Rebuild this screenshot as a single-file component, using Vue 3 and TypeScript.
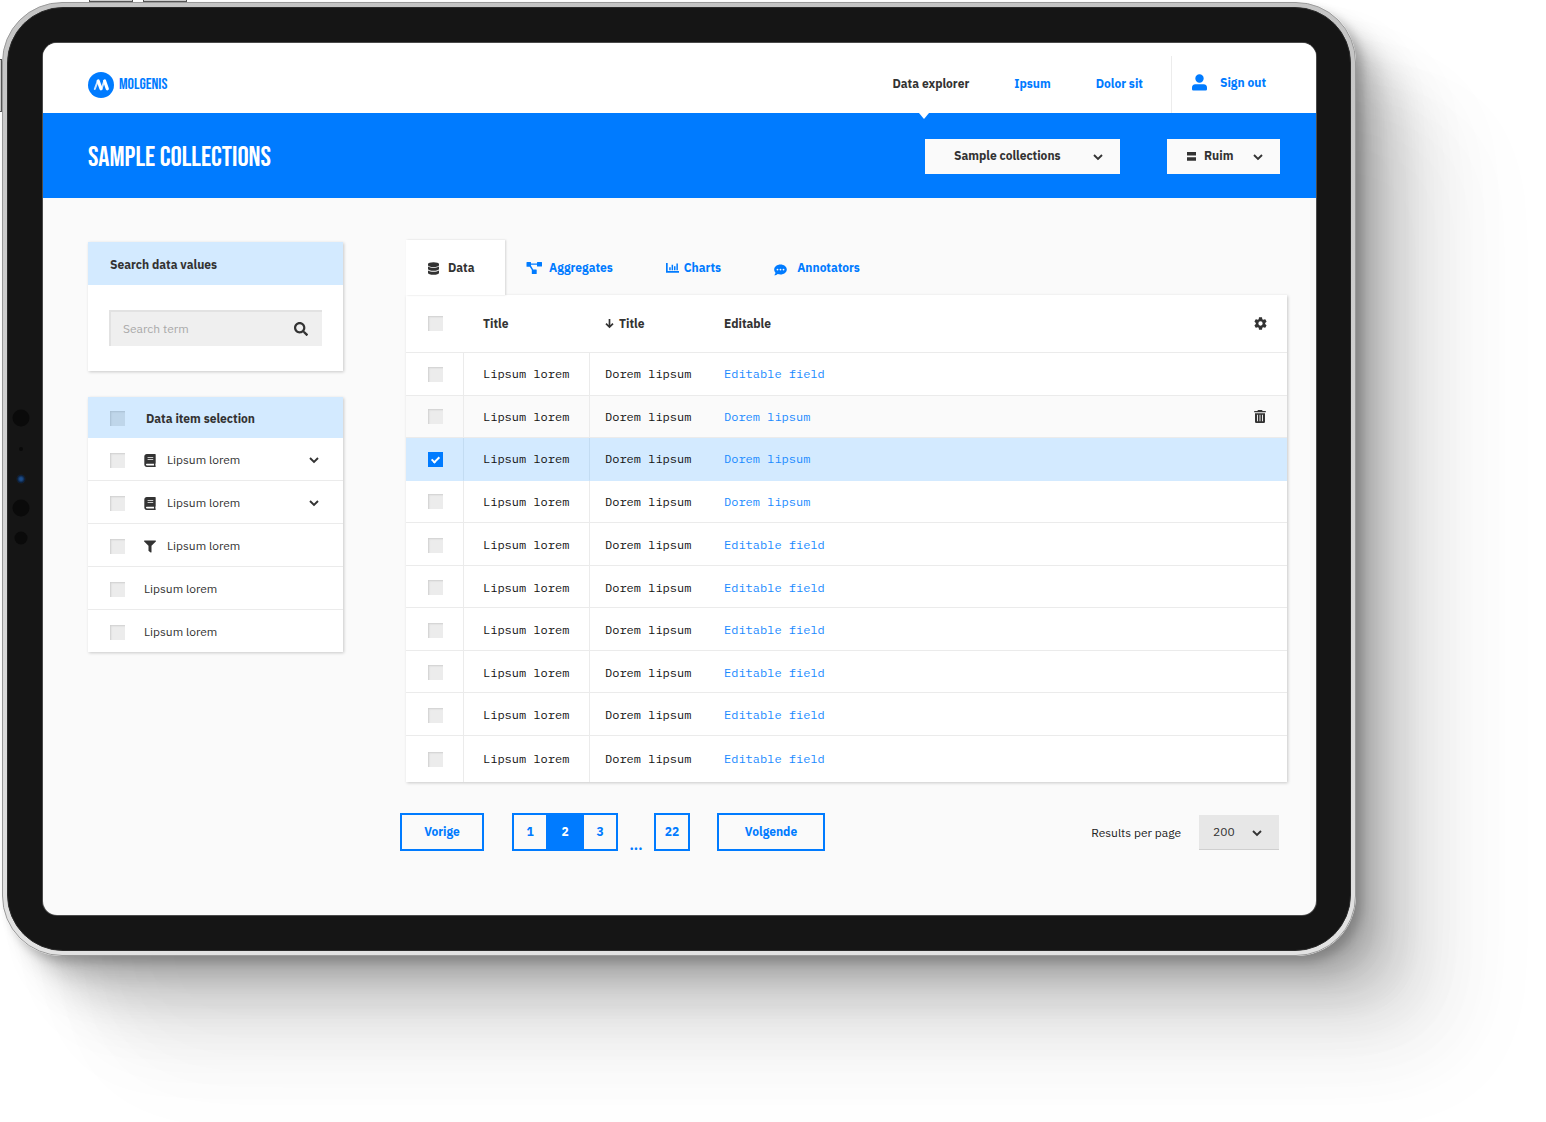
<script setup lang="ts">
import { reactive, ref } from 'vue'

interface Glyph {
  box: string
  d: string
}

const glyphs: Record<string, Glyph> = {
  user: {
    box: '0 0 15 17',
    d: 'M7.500 0.300a4.200 4.200 0 1 1 0 8.400a4.200 4.200 0 1 1 0 -8.400zM3.600 10.200h7.800a3.500 3.500 0 0 1 3.600 3.500v1.600a1.300 1.300 0 0 1 -1.300 1.300h-12.400a1.300 1.300 0 0 1 -1.300 -1.300v-1.600a3.500 3.500 0 0 1 3.600 -3.500z',
  },
  search: {
    box: '0 0 512 512',
    d: 'M505 442.700L405.300 343c-4.500-4.500-10.600-7-17-7H372c27.600-35.300 44-79.700 44-128C416 93.100 322.900 0 208 0S0 93.100 0 208s93.100 208 208 208c48.300 0 92.700-16.400 128-44v16.300c0 6.400 2.500 12.500 7 17l99.700 99.700c9.400 9.400 24.600 9.400 33.900 0l28.300-28.300c9.400-9.400 9.400-24.600.1-34zM208 336c-70.700 0-128-57.200-128-128 0-70.700 57.200-128 128-128 70.700 0 128 57.200 128 128 0 70.700-57.200 128-128 128z',
  },
  database: {
    box: '0 0 448 512',
    d: 'M448 73v46C448 159 348 192 224 192S0 159 0 119V73C0 33 100 0 224 0s224 33 224 73zM448 176v103C448 319 348 352 224 352S0 319 0 279V176c48 33 136 49 224 49S400 209 448 176zm0 160v103C448 479 348 512 224 512S0 479 0 439V336c48 33 136 49 224 49S400 369 448 336z',
  },
  filter: {
    box: '0 0 512 512',
    d: 'M488 0H24C3 0-8 26 7 41L192 226V432c0 8 4 15 10 20l80 56C298 519 320 507 320 488V226l185-185C520 26 509 0 488 0z',
  },
  book: {
    box: '0 0 448 512',
    d: 'M448 360V24c0-13.300-10.700-24-24-24H96C43 0 0 43 0 96v320c0 53 43 96 96 96h328c13.300 0 24-10.700 24-24v-16c0-7.500-3.500-14.300-8.900-18.700-4.200-15.400-4.200-59.300 0-74.700 5.400-4.300 8.900-11.100 8.900-18.600zM128 134c0-3.300 2.700-6 6-6h212c3.300 0 6 2.700 6 6v20c0 3.300-2.700 6-6 6H134c-3.300 0-6-2.700-6-6v-20zm0 64c0-3.300 2.700-6 6-6h212c3.300 0 6 2.700 6 6v20c0 3.300-2.700 6-6 6H134c-3.300 0-6-2.700-6-6v-20zm253.400 250H96c-17.700 0-32-14.300-32-32 0-17.600 14.400-32 32-32h285.400c-1.900 17.100-1.900 46.900 0 64z',
  },
  diagram: {
    box: '0 0 16 12',
    d: 'M0.500 0h4a.5.5 0 0 1 .5.500v.9h6v-.9a.5.5 0 0 1 .5-.5h4a.5.5 0 0 1 .5.500v3.500a.5.5 0 0 1-.5.500h-4a.5.5 0 0 1-.5-.5v-1.300h-6v1.100l2.200 3.700h3a.5.5 0 0 1 .5.500v3.500a.5.5 0 0 1-.5.500h-3.900a.5.5 0 0 1-.5-.5v-3.600l-2-3.200h-2.800a.5.5 0 0 1-.5-.5v-3.700a.5.5 0 0 1 .5-.5z',
  },
  chart: {
    box: '0 0 13 10',
    d: 'M0 0h1.700v8.100h11.300v1.700h-13zM3.200 4.300h1.500v3h-1.500zM5.600 1.800h1.500v5.500h-1.500zM8 3.200h1.500v4.100h-1.500zM10.400 .6h1.500v6.700h-1.500z',
  },
  comment: {
    box: '0 0 13 12',
    d: 'M6.500 .5c3.500 0 6.300 2.200 6.300 5s-2.800 5-6.300 5c-1 0-2-.2-2.800-.5c-.8.7-2 1.300-3.500 1.300c.8-.8 1.200-1.800 1.300-2.600c-.8-.9-1.300-2-1.300-3.200c0-2.800 2.800-5 6.300-5zM3.500 4.700a.9.9 0 1 0 0 1.800a.9.9 0 1 0 0-1.800zM6.500 4.700a.9.9 0 1 0 0 1.800a.9.9 0 1 0 0-1.800zM9.500 4.700a.9.9 0 1 0 0 1.800a.9.9 0 1 0 0-1.800z',
  },
  cog: {
    box: '2 2 20 20',
    d: 'M19.140 12.940c.04-.3.06-.61.06-.94 0-.32-.02-.64-.07-.94l2.030-1.580c.18-.14.23-.41.12-.61l-1.920-3.320c-.12-.22-.37-.29-.59-.22l-2.390.96c-.5-.38-1.030-.7-1.620-.94l-.36-2.540c-.04-.24-.24-.41-.48-.41h-3.840c-.24 0-.43.17-.47.41l-.36 2.540c-.59.24-1.130.57-1.620.94l-2.390-.96c-.22-.08-.47 0-.59.22L2.740 8.870c-.12.21-.08.47.12.61l2.030 1.580c-.05.3-.09.63-.09.94s.02.64.07.94l-2.030 1.580c-.18.14-.23.41-.12.61l1.920 3.320c.12.22.37.29.59.22l2.390-.96c.5.38 1.030.7 1.620.94l.36 2.540c.05.24.24.41.48.41h3.840c.24 0 .44-.17.47-.41l.36-2.540c.59-.24 1.130-.56 1.620-.94l2.390.96c.22.08.47 0 .59-.22l1.920-3.320c.12-.22.07-.47-.12-.61l-2.010-1.580zM12 15.300a3.300 3.300 0 1 1 0-6.600a3.300 3.300 0 1 1 0 6.600z',
  },
  trash: {
    box: '0 0 12 13',
    d: 'M4 0h4l.6.9h3.200v1.400h-11.600v-1.400h3.200zM1 3.200h10v8.600a1.200 1.200 0 0 1-1.200 1.200h-7.600a1.200 1.200 0 0 1-1.200-1.200zM3 4.700v6.600h.9v-6.600zM5.550 4.700v6.600h.9v-6.600zM8.100 4.700v6.600h.9v-6.600z',
  },
  rows: { box: '0 0 9 9', d: 'M0 0h9v3.600h-9zM0 5.200h9v3.600h-9z' },
}

const navLinks = ['Data explorer', 'Ipsum', 'Dolor sit']

const tabs = [
  { label: 'Data', icon: 'database' },
  { label: 'Aggregates', icon: 'diagram' },
  { label: 'Charts', icon: 'chart' },
  { label: 'Annotators', icon: 'comment' },
]

const filters = reactive([
  { icon: 'book', expandable: true, checked: false },
  { icon: 'book', expandable: true, checked: false },
  { icon: 'filter', expandable: false, checked: false },
  { icon: '', expandable: false, checked: false },
  { icon: '', expandable: false, checked: false },
])

const rows = reactive(
  Array.from({ length: 10 }, (_, i) => ({
    link: i >= 1 && i <= 3 ? 'Dorem lipsum' : 'Editable field',
    hovered: i === 1,
    checked: i === 2,
  })),
)

const activeTab = ref('Data')
const page = ref(2)
const term = ref('')
</script>

<template>
  <div class="page">
    <div class="tablet">
      <i class="key key-a"></i>
      <i class="key key-b"></i>
      <i class="key key-side"></i>
      <div class="bezel">
        <i class="sensor s1"></i>
        <i class="sensor s2"></i>
        <i class="sensor s3"></i>
        <i class="sensor s4"></i>
        <i class="sensor s5"></i>
        <div class="screen">
          <header class="topbar">
            <a class="brand" href="#">
              <svg width="26" height="26" viewBox="0 0 26 26" aria-hidden="true">
                <circle cx="13" cy="13" r="13" fill="#007bff" />
                <g fill="none" stroke="#fff" stroke-linecap="round">
                  <path d="M6.800 17L9.500 9.800M13.400 17L16 9.800" stroke-width="2" opacity=".8" />
                  <path d="M10.200 9L13 16.800M16.600 9L19.300 16.800" stroke-width="3.200" />
                </g>
              </svg>
              <span>MOLGENIS</span>
            </a>
            <nav class="nav">
              <a
                v-for="(link, i) in navLinks"
                :key="link"
                href="#"
                :class="{ current: i === 0 }"
              >{{ link }}</a>
            </nav>
            <a class="signout" href="#">
              <svg width="15" height="17" :viewBox="glyphs.user.box" aria-hidden="true"><path :d="glyphs.user.d" /></svg>
              <span>Sign out</span>
            </a>
          </header>

          <div class="hero">
            <h1>SAMPLE COLLECTIONS</h1>
            <div class="pick pick-collection">
              <select aria-label="Collection">
                <option>Sample collections</option>
              </select>
              <svg class="chev" viewBox="0 0 10 6"><path d="M1 1L5 5L9 1" /></svg>
            </div>
            <div class="pick pick-density">
              <svg class="lead" width="9" height="9" :viewBox="glyphs.rows.box"><path :d="glyphs.rows.d" /></svg>
              <select aria-label="Row spacing">
                <option>Ruim</option>
              </select>
              <svg class="chev" viewBox="0 0 10 6"><path d="M1 1L5 5L9 1" /></svg>
            </div>
          </div>

          <main class="main">
            <aside class="side">
              <section class="card">
                <h2 class="card-head"><label for="term">Search data values</label></h2>
                <div class="search">
                  <input id="term" v-model="term" type="text" placeholder="Search term" />
                  <button type="button" aria-label="Search">
                    <svg width="14" height="14" :viewBox="glyphs.search.box"><path :d="glyphs.search.d" /></svg>
                  </button>
                </div>
              </section>

              <section class="card">
                <h2 class="card-head tall">
                  <label class="pick-all"><input type="checkbox" class="box" />Data item selection</label>
                </h2>
                <ul class="items">
                  <li v-for="(item, i) in filters" :key="i">
                    <label>
                      <input v-model="item.checked" type="checkbox" class="box" />
                      <svg v-if="item.icon" width="12" height="13" :viewBox="glyphs[item.icon].box"><path :d="glyphs[item.icon].d" /></svg>
                      <span>Lipsum lorem</span>
                    </label>
                    <button v-if="item.expandable" type="button" aria-label="Expand">
                      <svg class="chev" viewBox="0 0 10 6"><path d="M1 1L5 5L9 1" /></svg>
                    </button>
                  </li>
                </ul>
              </section>
            </aside>

            <section class="content">
              <div class="tabs" role="tablist">
                <button
                  v-for="tab in tabs"
                  :key="tab.label"
                  type="button"
                  role="tab"
                  :aria-selected="activeTab === tab.label"
                  :class="['tab', tab.icon, { active: activeTab === tab.label }]"
                  @click="activeTab = tab.label"
                >
                  <svg :viewBox="glyphs[tab.icon].box" aria-hidden="true"><path :d="glyphs[tab.icon].d" /></svg>
                  <span>{{ tab.label }}</span>
                </button>
              </div>

              <table class="grid">
                <colgroup>
                  <col class="c-box" />
                  <col class="c-title" />
                  <col class="c-sorted" />
                  <col />
                  <col class="c-tools" />
                </colgroup>
                <thead>
                  <tr>
                    <th><input type="checkbox" class="box" aria-label="Select all rows" /></th>
                    <th>Title</th>
                    <th>
                      <span class="sorted">
                        <svg width="9" height="9" viewBox="0 0 9 9" aria-hidden="true"><path d="M4.500 0V8M1 4.600L4.500 8L8 4.600" /></svg>
                        Title
                      </span>
                    </th>
                    <th>Editable</th>
                    <th>
                      <button type="button" aria-label="Table settings">
                        <svg width="13" height="13" :viewBox="glyphs.cog.box"><path :d="glyphs.cog.d" /></svg>
                      </button>
                    </th>
                  </tr>
                </thead>
                <tbody>
                  <tr v-for="(row, i) in rows" :key="i" :class="{ hovered: row.hovered, picked: row.checked }">
                    <td><input v-model="row.checked" type="checkbox" class="box" aria-label="Select row" /></td>
                    <td>Lipsum lorem</td>
                    <td>Dorem lipsum</td>
                    <td><a href="#">{{ row.link }}</a></td>
                    <td>
                      <button v-if="row.hovered" type="button" aria-label="Delete row">
                        <svg width="12" height="13" :viewBox="glyphs.trash.box"><path :d="glyphs.trash.d" /></svg>
                      </button>
                    </td>
                  </tr>
                </tbody>
              </table>

              <div class="pager">
                <button type="button" class="step prev">Vorige</button>
                <div class="pages">
                  <button
                    v-for="n in 3"
                    :key="n"
                    type="button"
                    :class="{ on: page === n }"
                    @click="page = n"
                  >{{ n }}</button>
                </div>
                <span class="dots">...</span>
                <div class="pages">
                  <button type="button">22</button>
                </div>
                <button type="button" class="step next">Volgende</button>
                <label class="per-label" for="per">Results per page</label>
                <div class="pick pick-per">
                  <select id="per">
                    <option>200</option>
                  </select>
                  <svg class="chev" viewBox="0 0 10 6"><path d="M1 1L5 5L9 1" /></svg>
                </div>
              </div>
            </section>
          </main>
        </div>
      </div>
    </div>
  </div>
</template>

<style>
body {
  margin: 0;
  background: #fff;
}
</style>

<style scoped>
* {
  box-sizing: border-box;
}

.page {
  min-height: 100vh;
  padding: 2px 190px 0 2px;
  overflow: hidden;
  font: 12px/18px 'IBM Plex Sans', Roboto, sans-serif;
  color: #333;
}

a {
  color: #007bff;
  text-decoration: none;
}

button {
  padding: 0;
  border: 0;
  background: none;
  font: inherit;
  color: inherit;
  cursor: pointer;
}

svg {
  display: block;
  flex: none;
  fill: currentColor;
  fill-rule: evenodd;
}

/* device */
.tablet {
  position: relative;
  border: 1px solid #9a9a9a;
  border-radius: 60px;
  padding: 4px;
  background: linear-gradient(#c4c4c4, #e2e2e2);
  box-shadow:
    6px 6px 10px rgba(0, 0, 0, 0.2),
    18px 18px 20px rgba(0, 0, 0, 0.13),
    36px 36px 36px rgba(0, 0, 0, 0.12),
    60px 60px 54px rgba(0, 0, 0, 0.08),
    90px 90px 76px rgba(0, 0, 0, 0.05),
    115px 115px 100px rgba(0, 0, 0, 0.03);
}

.key {
  position: absolute;
  background: #ccc;
  border: 1px solid #555;
}

.key-a,
.key-b {
  top: -6px;
  width: 44px;
  height: 5px;
}

.key-a {
  left: 86px;
}

.key-b {
  left: 140px;
}

.key-side {
  top: 56px;
  left: -6px;
  width: 5px;
  height: 53px;
}

.bezel {
  position: relative;
  padding: 35px 34px 35px 35px;
  border: 1px solid #2a2a2a;
  border-radius: 56px;
  background: #151515;
}

.sensor {
  position: absolute;
  border-radius: 50%;
  background: #0a0a0a;
  transform: translate(-50%, -50%);
  left: 13px;
}

.s1 {
  top: 410px;
  width: 17px;
  height: 17px;
}

.s2 {
  top: 441px;
  width: 4px;
  height: 4px;
}

.s3 {
  top: 471px;
  width: 9px;
  height: 9px;
  background: radial-gradient(#1b4c8a 20%, #0c1c33 60%, #252525 80%);
}

.s4 {
  top: 500px;
  width: 17px;
  height: 17px;
}

.s5 {
  top: 530px;
  width: 13px;
  height: 13px;
}

.screen {
  border-radius: 14px;
  overflow: hidden;
  background: #fafafa;
  box-shadow: 0 0 0 1px #4a4a4a;
}

/* top bar */
.topbar {
  display: flex;
  align-items: stretch;
  height: 70px;
  background: #fff;
  font-weight: 700;
}

.brand {
  display: flex;
  align-items: center;
  gap: 5px;
  padding: 13px 0 0 45px;
  height: 70px;
  font: 400 16px/18px 'Bebas Neue', 'Liberation Sans Narrow', 'Roboto Condensed', Roboto, sans-serif;
}

.nav {
  display: flex;
  align-items: center;
  gap: 45px;
  margin-left: auto;
  padding: 12px 28px 0 0;
}

.nav .current {
  position: relative;
  color: #333;
}

.nav .current::after {
  content: '';
  position: absolute;
  top: 38px;
  left: 26px;
  border: 5px solid transparent;
  border-top: 6px solid #fff;
}

.signout {
  display: flex;
  align-items: center;
  gap: 13px;
  margin-top: 13px;
  padding: 0 50px 4px 20px;
  border-left: 1px solid #ececec;
}

/* blue band */
.hero {
  display: flex;
  align-items: center;
  height: 85px;
  padding: 2px 36px 0 45px;
  background: #007bff;
}

h1 {
  margin: 0 auto 0 0;
  padding-top: 2px;
  font: 400 28px/32px 'Bebas Neue', 'Liberation Sans Narrow', 'Roboto Condensed', Roboto, sans-serif;
  color: #fff;
}

.pick {
  position: relative;
  height: 35px;
}

.pick select {
  width: 100%;
  height: 100%;
  margin: 0;
  border: 0;
  border-radius: 0;
  appearance: none;
  background: #fafafa;
  font: inherit;
  font-weight: 700;
  color: #333;
}

.chev {
  width: 10px;
  height: 6px;
  overflow: visible;
  fill: none;
  stroke: #333;
  stroke-width: 1.9;
}

.pick .chev {
  position: absolute;
  top: 15px;
  right: 17px;
  pointer-events: none;
}

.pick .lead {
  position: absolute;
  top: 13px;
  left: 20px;
}

.pick-collection {
  width: 195px;
  margin-right: 47px;
}

.pick-collection select {
  padding: 0 29px 1px;
}

.pick-density {
  width: 113px;
}

.pick-density select {
  padding: 0 28px 1px 37px;
}

/* main area */
.main {
  display: grid;
  grid-template-columns: 255px minmax(0, 1fr);
  gap: 57px;
  padding: 42px 29px 64px 45px;
}

.side {
  display: flex;
  flex-direction: column;
  gap: 26px;
  padding-top: 2px;
}

.card {
  overflow: hidden;
  background: #fff;
  box-shadow: 1px 1px 3px rgba(0, 0, 0, 0.2);
}

.card-head {
  display: flex;
  align-items: center;
  height: 43px;
  margin: 0;
  padding: 2px 22px 0;
  background: #d3eaff;
  font: inherit;
  font-weight: 700;
}

.card-head.tall {
  height: 41px;
}

.pick-all {
  display: flex;
  align-items: center;
  gap: 21px;
}

.search {
  display: flex;
  align-items: center;
  height: 36px;
  margin: 25px 21px;
  padding: 0 14px 0 12px;
  background: #efefef;
  border: solid #e2e2e2;
  border-width: 2px 0 0 2px;
}

.search input {
  flex: 1;
  min-width: 0;
  padding: 0;
  border: 0;
  outline: 0;
  background: none;
  font: inherit;
}

.search input::placeholder {
  color: #a9a9a9;
}

.box {
  position: relative;
  flex: none;
  display: block;
  width: 15px;
  height: 15px;
  margin: 0;
  appearance: none;
  background: #ececec;
  box-shadow: inset 2px 2px 2px -1px #cfcfcf;
}

.card-head .box {
  background: #bfd6ea;
  box-shadow: inset 2px 2px 2px -1px #a9c0d3;
}

.box:checked {
  background: #007bff;
  box-shadow: none;
}

.box:checked::before {
  content: '';
  position: absolute;
  top: 3px;
  left: 5px;
  width: 3px;
  height: 6px;
  border: solid #fff;
  border-width: 0 2px 2px 0;
  transform: rotate(45deg);
}

.items {
  margin: 0;
  padding: 0;
  list-style: none;
}

.items li {
  display: flex;
  align-items: center;
  height: 43px;
  padding: 2px 24px 0 22px;
  border-bottom: 1px solid #ebebeb;
}

.items li:last-child {
  height: 42px;
  border-bottom: 0;
}

.items label {
  display: flex;
  flex: 1;
  align-items: center;
}

.items label svg {
  margin: 0 11px 0 19px;
}

.items label .box + span {
  margin-left: 19px;
}

/* tabs */
.tabs {
  display: flex;
  height: 55px;
  margin-left: 6px;
  font-weight: 700;
  color: #007bff;
}

.tab {
  display: flex;
  align-items: center;
}

.tab.active {
  position: relative;
  background: #fff;
  color: #333;
  box-shadow: 1px 0 2px rgba(0, 0, 0, 0.15);
}

.tab.database {
  width: 99px;
  margin-right: 21px;
  gap: 9px;
  padding-left: 22px;
}

.database svg {
  width: 11px;
  height: 13px;
  margin-top: 2px;
}

.diagram {
  gap: 7px;
}

.diagram svg {
  width: 16px;
  height: 12px;
}

.chart {
  gap: 5px;
  margin: 0 53px;
}

.chart svg {
  width: 13px;
  height: 10px;
}

.comment {
  gap: 10px;
}

.comment svg {
  width: 13px;
  height: 12px;
  margin-top: 4px;
}

/* table */
.grid {
  width: calc(100% - 6px);
  margin-left: 6px;
  table-layout: fixed;
  border-spacing: 0;
  background: #fff;
  box-shadow: 1px 1px 3px rgba(0, 0, 0, 0.2);
}

.c-box {
  width: 58px;
}

.c-title {
  width: 126px;
}

.c-sorted {
  width: 119px;
}

.c-tools {
  width: 52px;
}

.grid th,
.grid td {
  padding: 0 0 0 15px;
  text-align: left;
  border-bottom: 1px solid #ebebeb;
}

.grid th {
  height: 58px;
}

.grid td {
  height: 43px;
  font: 12px/18px 'IBM Plex Mono', 'Liberation Mono', monospace;
  color: #111;
}

.grid tr:nth-child(even) td {
  height: 42px;
}

.grid tr:nth-child(n + 5) td {
  padding-top: 2px;
}

.grid tr:last-child td {
  height: 46px;
  padding-bottom: 2px;
}

.grid tbody tr:last-child td {
  border-bottom: 0;
}

.grid td:nth-child(-n + 2) {
  border-right: 1px solid #ebebeb;
}

.grid tr > :first-child {
  padding-left: 22px;
}

.grid tr > :nth-child(2) {
  padding-left: 19px;
}

.grid td a {
  color: #1a8aff;
}

.grid .hovered td {
  background: #fafafa;
}

.grid .picked td {
  background: #d3eaff;
  border-color: #c3dcf2;
  border-bottom-color: #d3eaff;
}

.grid button {
  display: block;
  margin-left: 4px;
  color: #333;
}

.sorted {
  display: flex;
  align-items: center;
  gap: 5px;
}

.sorted svg {
  overflow: visible;
  fill: none;
  stroke: currentColor;
  stroke-width: 1.7;
}

/* pagination */
.pager {
  display: flex;
  align-items: center;
  margin-top: 31px;
  padding-right: 8px;
}

.step,
.pages {
  height: 38px;
  border: 2px solid #007bff;
  font-weight: 700;
  color: #007bff;
}

.prev {
  width: 84px;
  margin-right: 28px;
}

.pages {
  display: flex;
}

.pages button {
  width: 32px;
}

.pages .on {
  width: 38px;
  background: #007bff;
  color: #fff;
}

.dots {
  align-self: flex-end;
  width: 36px;
  text-align: center;
  font-weight: 700;
  font-size: 14px;
  line-height: 12px;
  color: #007bff;
}

.next {
  width: 108px;
  margin-left: 27px;
}

.per-label {
  margin-left: auto;
  margin-right: 18px;
  padding-top: 2px;
  color: #222;
}

.pick-per {
  width: 80px;
}

.pick-per select {
  padding: 0 30px 0 14px;
  border-bottom: 1px solid #cfcfcf;
  background: #e7e7e7;
  font-weight: 400;
}
</style>
